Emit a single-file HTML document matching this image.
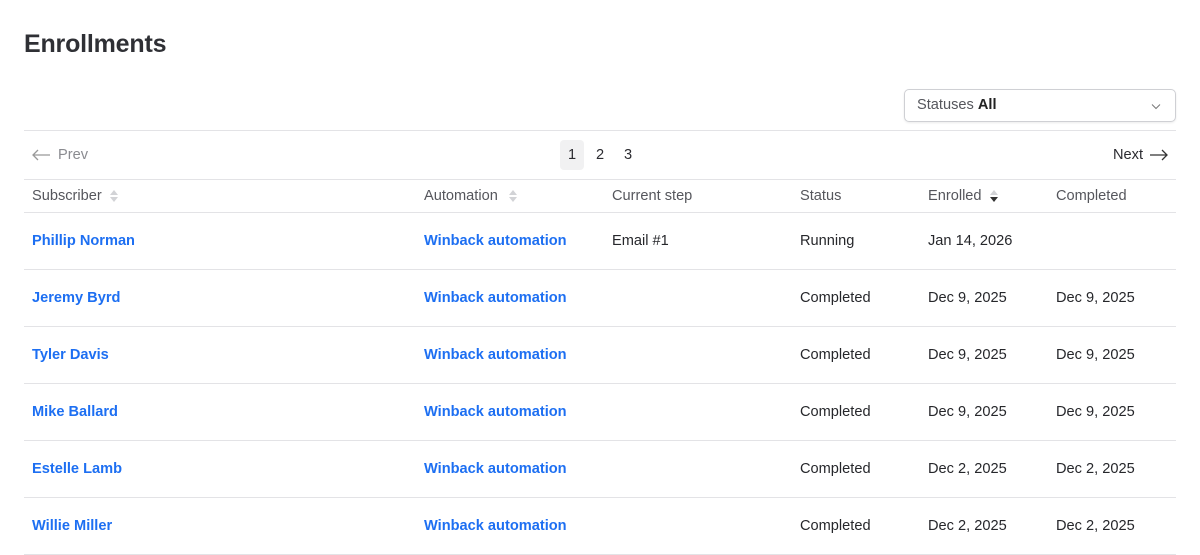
<!DOCTYPE html>
<html><head><style>
*{box-sizing:border-box;margin:0;padding:0}
body{width:1200px;height:555px;background:#fff;font-family:"Liberation Sans",sans-serif;color:#2b2b30;position:relative;overflow:hidden}
.a{position:absolute;white-space:nowrap}
h1{position:absolute;left:24px;top:30px;font-size:25px;font-weight:bold;color:#2f3035;letter-spacing:-0.2px}
.line{position:absolute;left:24px;width:1152px;height:1px;background:#e3e3e6}
.sel{position:absolute;left:904px;top:89px;width:272px;height:33px;border:1px solid #cfd0d4;border-radius:5px;box-shadow:0 1px 2px rgba(0,0,0,.08)}
.th{color:#55565c;font-size:14.6px}
.lk{color:#1d6ff2;font-weight:bold;font-size:14.6px}
.td{font-size:14.6px;color:#26272b}
.pg{font-size:14.6px}
</style></head><body>
<h1>Enrollments</h1>
<div class="sel"><span class="a" style="left:12px;top:7px;font-size:14.6px;color:#55565c">Statuses <b style="color:#222">All</b></span>
<svg class="a" style="left:246px;top:13px" width="10" height="7" viewBox="0 0 10 7"><path d="M1 1.5L5 5.5L9 1.5" fill="none" stroke="#777" stroke-width="1"/></svg></div>
<div class="line" style="top:130px"></div>
<svg class="a" style="left:31px;top:149px" width="20" height="12" viewBox="0 0 20 12"><path d="M19 6H2M7 1L2 6L7 11" fill="none" stroke="#999" stroke-width="1.3"/></svg>
<span class="a pg" style="left:58px;top:147px;color:#8a8b90">Prev</span>
<div class="a" style="left:560px;top:140px;width:24px;height:30px;background:#f1f1f2;border-radius:4px"></div>
<span class="a pg" style="left:568px;top:147px">1</span>
<span class="a pg" style="left:596px;top:147px">2</span>
<span class="a pg" style="left:624px;top:147px">3</span>
<span class="a pg" style="left:1113px;top:147px">Next</span>
<svg class="a" style="left:1149px;top:149px" width="20" height="12" viewBox="0 0 20 12"><path d="M1 6H18M13 1L18 6L13 11" fill="none" stroke="#333" stroke-width="1.3"/></svg>
<div class="line" style="top:179px"></div>
<span class="a th" style="left:32px;top:188px">Subscriber</span>
<svg class="a" style="left:109px;top:188px" width="10" height="16"><path d="M1 7L5 2L9 7Z M1 9L5 14L9 9Z" fill="#d2d3d6"/></svg>
<span class="a th" style="left:424px;top:188px">Automation</span>
<svg class="a" style="left:508px;top:188px" width="10" height="16"><path d="M1 7L5 2L9 7Z M1 9L5 14L9 9Z" fill="#d2d3d6"/></svg>
<span class="a th" style="left:612px;top:188px">Current step</span>
<span class="a th" style="left:800px;top:188px">Status</span>
<span class="a th" style="left:928px;top:188px">Enrolled</span>
<svg class="a" style="left:989px;top:188px" width="10" height="16"><path d="M1 7L5 2L9 7Z" fill="#d2d3d6"/><path d="M1 9L5 14L9 9Z" fill="#333"/></svg>
<span class="a th" style="left:1056px;top:188px">Completed</span>
<div class="line" style="top:212px"></div>

<span class="a lk" style="left:32px;top:233px">Phillip Norman</span><span class="a lk" style="left:424px;top:233px">Winback automation</span><span class="a td" style="left:612px;top:233px">Email #1</span><span class="a td" style="left:800px;top:233px">Running</span><span class="a td" style="left:928px;top:233px">Jan 14, 2026</span>
<div class="line" style="top:269px"></div>
<span class="a lk" style="left:32px;top:290px">Jeremy Byrd</span><span class="a lk" style="left:424px;top:290px">Winback automation</span><span class="a td" style="left:800px;top:290px">Completed</span><span class="a td" style="left:928px;top:290px">Dec 9, 2025</span><span class="a td" style="left:1056px;top:290px">Dec 9, 2025</span>
<div class="line" style="top:326px"></div>
<span class="a lk" style="left:32px;top:347px">Tyler Davis</span><span class="a lk" style="left:424px;top:347px">Winback automation</span><span class="a td" style="left:800px;top:347px">Completed</span><span class="a td" style="left:928px;top:347px">Dec 9, 2025</span><span class="a td" style="left:1056px;top:347px">Dec 9, 2025</span>
<div class="line" style="top:383px"></div>
<span class="a lk" style="left:32px;top:404px">Mike Ballard</span><span class="a lk" style="left:424px;top:404px">Winback automation</span><span class="a td" style="left:800px;top:404px">Completed</span><span class="a td" style="left:928px;top:404px">Dec 9, 2025</span><span class="a td" style="left:1056px;top:404px">Dec 9, 2025</span>
<div class="line" style="top:440px"></div>
<span class="a lk" style="left:32px;top:461px">Estelle Lamb</span><span class="a lk" style="left:424px;top:461px">Winback automation</span><span class="a td" style="left:800px;top:461px">Completed</span><span class="a td" style="left:928px;top:461px">Dec 2, 2025</span><span class="a td" style="left:1056px;top:461px">Dec 2, 2025</span>
<div class="line" style="top:497px"></div>
<span class="a lk" style="left:32px;top:518px">Willie Miller</span><span class="a lk" style="left:424px;top:518px">Winback automation</span><span class="a td" style="left:800px;top:518px">Completed</span><span class="a td" style="left:928px;top:518px">Dec 2, 2025</span><span class="a td" style="left:1056px;top:518px">Dec 2, 2025</span>
<div class="line" style="top:554px"></div>
</body></html>
